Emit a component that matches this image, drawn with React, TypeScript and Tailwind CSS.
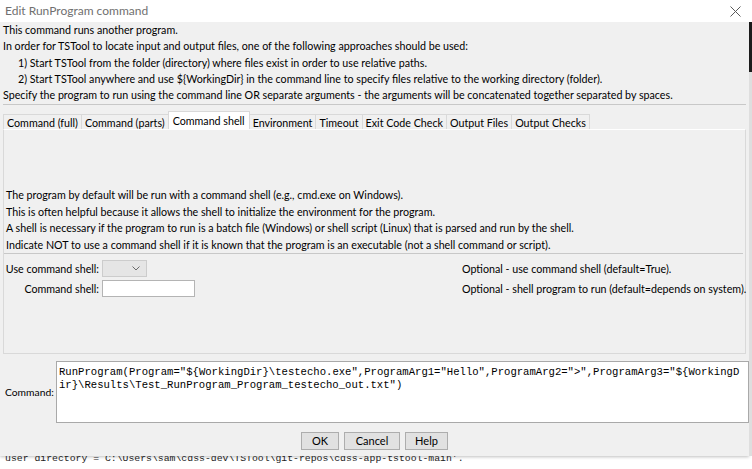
const tabs = [
  { label: "Command (full)" },
  { label: "Command (parts)" },
  { label: "Command shell", active: true },
  { label: "Environment" },
  { label: "Timeout" },
  { label: "Exit Code Check" },
  { label: "Output Files" },
  { label: "Output Checks" },
];

const intro = [
  { text: "This command runs another program.", indent: false },
  { text: "In order for TSTool to locate input and output files, one of the following approaches should be used:", indent: false },
  { text: "1) Start TSTool from the folder (directory) where files exist in order to use relative paths.", indent: true },
  { text: "2) Start TSTool anywhere and use ${WorkingDir} in the command line to specify files relative to the working directory (folder).", indent: true },
  { text: "Specify the program to run using the command line OR separate arguments - the arguments will be concatenated together separated by spaces.", indent: false },
];

const shellNotes = [
  "The program by default will be run with a command shell (e.g., cmd.exe on Windows).",
  "This is often helpful because it allows the shell to initialize the environment for the program.",
  "A shell is necessary if the program to run is a batch file (Windows) or shell script (Linux) that is parsed and run by the shell.",
  "Indicate NOT to use a command shell if it is known that the program is an executable (not a shell command or script).",
];

function DialogButton({ label, width }: { label: string; width: string }) {
  return (
    <button
      type="button"
      className={`flex h-[18px] ${width} items-center justify-center border border-[#adadad] bg-[#e1e1e1] text-[11px] text-black`}
    >
      {label}
    </button>
  );
}

export default function App() {
  return (
    <div
      className="flex h-[469px] w-[752px] flex-col overflow-hidden bg-white text-black"
      style={{ fontFamily: 'Lato, "Liberation Sans", Arial, sans-serif' }}
    >
      <div className="flex h-[456px] shrink-0">
        <div className="flex w-[749px] flex-col bg-[#f0f0f0] shadow-[0_1px_3px_rgba(0,0,0,0.25)]">
          {/* title bar */}
          <div className="flex h-[22px] shrink-0 items-center justify-between bg-white pl-[5px] pr-[6px]">
            <span className="text-[12px] text-[#707070]">Edit RunProgram command</span>
            <svg width="11" height="11" viewBox="0 0 11 11" className="mr-[2px]">
              <path d="M0.5 0.5 L10.5 10.5 M10.5 0.5 L0.5 10.5" stroke="#5a5a5a" strokeWidth="1" fill="none" />
            </svg>
          </div>

          {/* intro text */}
          <div className="px-[3px] text-[10.7px] leading-[16.3px]">
            {intro.map((line) => (
              <p key={line.text} className={`whitespace-nowrap ${line.indent ? "pl-[15px]" : ""}`}>
                {line.text}
              </p>
            ))}
          </div>
          <div className="mx-[3px] mt-[1px] border-t border-[#c8c8c8]" />

          {/* tabs */}
          <div className="ml-[4px] mt-[6px] flex h-[18px] items-end">
            {tabs.map((tab) =>
              tab.active ? (
                <div
                  key={tab.label}
                  className="-ml-px flex h-[18px] items-center justify-center whitespace-nowrap border border-b-0 border-[#d9d9d9] bg-white px-[4px] text-[10.7px]"
                >
                  {tab.label}
                </div>
              ) : (
                <div
                  key={tab.label}
                  className="-ml-px flex h-[15px] items-center justify-center whitespace-nowrap border border-b-0 border-[#d9d9d9] bg-[#f0f0f0] px-[3px] pt-[1px] text-[10.7px]"
                >
                  {tab.label}
                </div>
              )
            )}
          </div>

          {/* tab panel */}
          <div className="mx-[3px] flex h-[225px] flex-col border border-t-white border-[#d9d9d9] pl-[2px] pr-[2px]">
            <div className="mt-[57px] text-[10.7px] leading-[16.5px]">
              {shellNotes.map((line) => (
                <p key={line} className="whitespace-nowrap">
                  {line}
                </p>
              ))}
            </div>
            <div className="-ml-[2px] border-t border-[#c8c8c8]" />

            <div className="mt-[6px] grid grid-cols-[93px_357px_1fr] items-center gap-x-[3px] gap-y-[3px] whitespace-nowrap text-[10.7px]">
              <span className="flex justify-end">Use command shell:</span>
              <div>
                <div className="flex h-[17px] w-[45px] items-center justify-end border border-[#cccccc] bg-[#e5e5e5] pr-[6px]">
                  <svg width="8" height="5" viewBox="0 0 8 5">
                    <path d="M0.5 0.5 L4 4 L7.5 0.5" stroke="#6b6b6b" strokeWidth="1" fill="none" />
                  </svg>
                </div>
              </div>
              <span>Optional - use command shell (default=True).</span>

              <span className="flex justify-end">Command shell:</span>
              <div>
                <div className="h-[17px] w-[93px] border border-[#b4b4b4] bg-white" />
              </div>
              <span>Optional - shell program to run (default=depends on system).</span>
            </div>
          </div>

          {/* command text */}
          <div className="mt-[7px] flex items-center pl-[5px]">
            <span className="w-[51px] text-[10.3px]">Command:</span>
            <div
              className="h-[62px] flex-1 overflow-hidden border border-[#a9a9a9] bg-white pl-[2px] pt-[4px] text-[10.6px] leading-[12.7px]"
              style={{ fontFamily: '"Liberation Mono", "Courier New", monospace' }}
            >
              <p className="whitespace-pre">
                RunProgram(Program="${"{"}WorkingDir{"}"}\testecho.exe",ProgramArg1="Hello",ProgramArg2="&gt;",ProgramArg3="${"{"}WorkingD
              </p>
              <p className="whitespace-pre">ir{"}"}\Results\Test_RunProgram_Program_testecho_out.txt")</p>
            </div>
          </div>

          {/* buttons */}
          <div className="mt-[9px] flex justify-center gap-[5px]">
            <DialogButton label="OK" width="w-[38px]" />
            <DialogButton label="Cancel" width="w-[56px]" />
            <DialogButton label="Help" width="w-[43px]" />
          </div>
        </div>

        {/* window behind, right edge */}
        <div className="flex w-[3px] flex-col">
          <div className="h-[22px] bg-white" />
          <div className="h-[50px] bg-[#1b1b1b]" />
          <div className="flex-1 bg-[#dedede]" />
        </div>
      </div>

      {/* console behind the dialog */}
      <div className="h-[13px] overflow-hidden pl-[5px]">
        <p
          className="-mt-[3px] whitespace-pre text-[9.8px] leading-[12px] text-[#222]"
          style={{ fontFamily: '"Liberation Mono", "Courier New", monospace' }}
        >
          user directory = C:\Users\sam\cdss-dev\TSTool\git-repos\cdss-app-tstool-main'.
        </p>
      </div>
    </div>
  );
}
